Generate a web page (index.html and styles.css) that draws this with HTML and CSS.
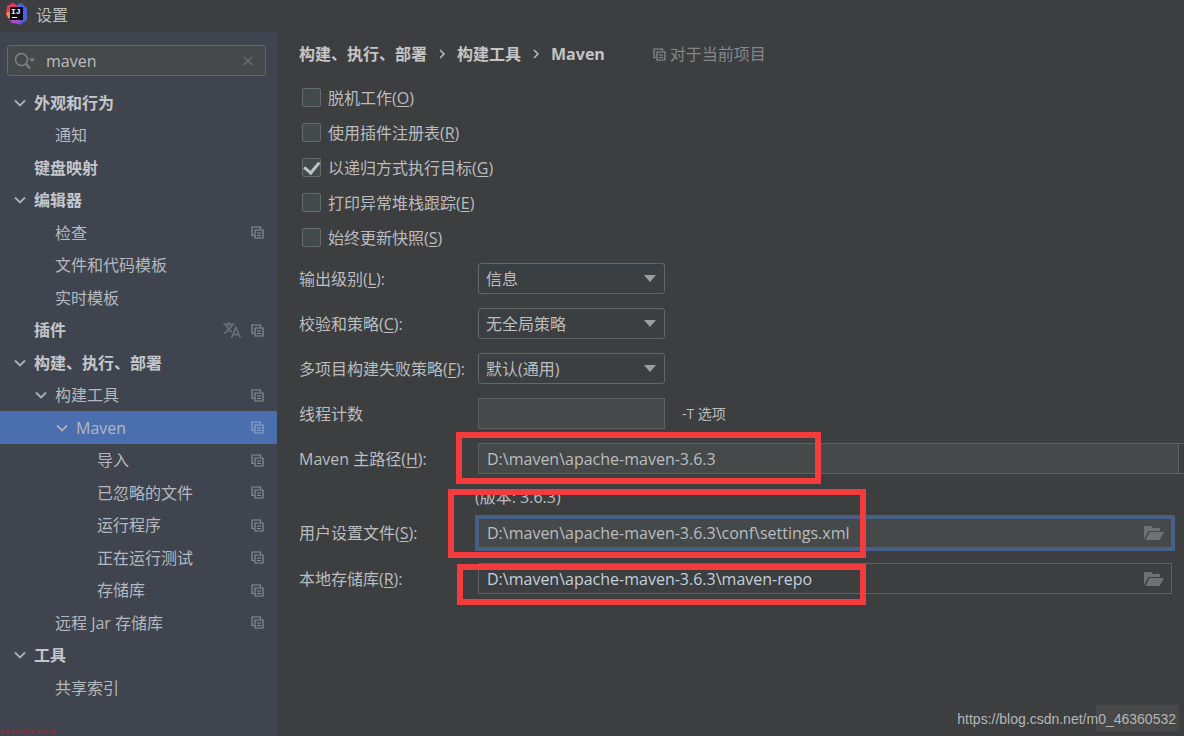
FILE: index.html
```html
<!DOCTYPE html>
<html lang="zh-CN">
<head>
<meta charset="utf-8">
<title>设置</title>
<link rel="stylesheet" href="styles.css">
</head>
<body>
<svg class="defs" aria-hidden="true">
  <symbol id="copy" viewBox="0 0 13 13"><path d="M3 9.500H1V1H9.500V3M4 4H12V12H4zM6 7H10M6 9.500H10" fill="none" stroke="currentColor" stroke-width="1.2"/></symbol>
  <symbol id="chevron" viewBox="0 0 12 8"><path d="M1 1.500L6 6.500L11 1.500" fill="none" stroke="currentColor" stroke-width="1.8"/></symbol>
  <symbol id="arrow" viewBox="0 0 12 7"><path d="M0 0H12L6 7z" fill="currentColor"/></symbol>
  <symbol id="folder" viewBox="0 0 20 16"><path d="M0 14V1H7L9 3H16V6H4.500zM5.500 7H20L15.500 15H1.500z" fill="currentColor"/></symbol>
  <symbol id="translate" viewBox="0 0 18 18"><path d="M0.500 3.500H11M5.800 1V3.500M8.800 3.500C8 7 5 10 1 12.500M3 3.500C4 7 6.500 9.500 9 11M8.500 17L12.800 6.500L17.200 17M10 13.500H15.700" fill="none" stroke="currentColor" stroke-width="1.8"/></symbol>
</svg>
<header class="titlebar">
  <svg class="logo" viewBox="0 0 22 22" aria-hidden="true">
    <path d="M1 3L7 0L12 3V10L3 15L0 11z" fill="#e8375f"/>
    <path d="M0 10L5 8V16L2 15z" fill="#f58a3c"/>
    <path d="M11 2L15 0L21 5V17L14 22L9 18z" fill="#4b62dc"/>
    <path d="M3 17L6 20L12 21L15 17z" fill="#a84ac4"/>
    <path d="M4 4H17V17H4z" fill="#08070b"/>
    <text class="logo-text" x="5" y="11">IJ</text>
    <path d="M6 14.500H11" stroke="#fff"/>
  </svg>
  <h1 class="title">设置</h1>
</header>
<div class="layout">
  <aside class="sidebar">
    <div class="search">
      <svg class="search-icon" viewBox="0 0 22 18" aria-hidden="true"><circle cx="7.500" cy="7.500" r="6" fill="none" stroke="currentColor" stroke-width="1.5"/><path d="M12 12L16 16.500" stroke="currentColor" stroke-width="2"/><path d="M15 6.500H21L18 10z" fill="currentColor"/></svg>
      <input class="search-input" type="text" value="maven" aria-label="搜索">
      <button class="clear" type="button" aria-label="清除"><svg viewBox="0 0 10 10"><path d="M1 1L9 9M9 1L1 9" stroke="currentColor" stroke-width="1.2"/></svg></button>
    </div>
    <ul class="tree">
      <li class="node top"><svg class="chev"><use href="#chevron"/></svg><span class="name">外观和行为</span></li>
      <li class="node l1"><span class="name">通知</span></li>
      <li class="node top leaf"><span class="name">键盘映射</span></li>
      <li class="node top"><svg class="chev"><use href="#chevron"/></svg><span class="name">编辑器</span></li>
      <li class="node l1"><span class="name">检查</span><svg class="copy"><use href="#copy"/></svg></li>
      <li class="node l1"><span class="name">文件和代码模板</span></li>
      <li class="node l1"><span class="name">实时模板</span></li>
      <li class="node top leaf"><span class="name">插件</span><svg class="translate"><use href="#translate"/></svg><svg class="copy"><use href="#copy"/></svg></li>
      <li class="node top"><svg class="chev"><use href="#chevron"/></svg><span class="name">构建、执行、部署</span></li>
      <li class="node sub"><svg class="chev"><use href="#chevron"/></svg><span class="name">构建工具</span><svg class="copy"><use href="#copy"/></svg></li>
      <li class="node subsub selected"><svg class="chev"><use href="#chevron"/></svg><span class="name">Maven</span><svg class="copy"><use href="#copy"/></svg></li>
      <li class="node l3"><span class="name">导入</span><svg class="copy"><use href="#copy"/></svg></li>
      <li class="node l3"><span class="name">已忽略的文件</span><svg class="copy"><use href="#copy"/></svg></li>
      <li class="node l3"><span class="name">运行程序</span><svg class="copy"><use href="#copy"/></svg></li>
      <li class="node l3"><span class="name">正在运行测试</span><svg class="copy"><use href="#copy"/></svg></li>
      <li class="node l3"><span class="name">存储库</span><svg class="copy"><use href="#copy"/></svg></li>
      <li class="node l1"><span class="name">远程 Jar 存储库</span><svg class="copy"><use href="#copy"/></svg></li>
      <li class="node top"><svg class="chev"><use href="#chevron"/></svg><span class="name">工具</span></li>
      <li class="node l1"><span class="name">共享索引</span></li>
    </ul>
  </aside>
  <main class="main">
    <div class="heading">
      <nav class="crumbs"><span>构建、执行、部署</span><svg class="sep" viewBox="0 0 6 10"><path d="M1 1L5 5L1 9"/></svg><span>构建工具</span><svg class="sep" viewBox="0 0 6 10"><path d="M1 1L5 5L1 9"/></svg><span>Maven</span></nav>
      <div class="scope"><svg class="copy"><use href="#copy"/></svg><span>对于当前项目</span></div>
    </div>
    <div class="checks">
      <label class="check"><input type="checkbox"><span>脱机工作(<u>O</u>)</span></label>
      <label class="check"><input type="checkbox"><span>使用插件注册表(<u>R</u>)</span></label>
      <label class="check"><input type="checkbox" checked><span>以递归方式执行目标(<u>G</u>)</span></label>
      <label class="check"><input type="checkbox"><span>打印异常堆栈跟踪(<u>E</u>)</span></label>
      <label class="check"><input type="checkbox"><span>始终更新快照(<u>S</u>)</span></label>
    </div>
    <div class="form">
      <div class="row"><label for="level">输出级别(<u>L</u>):</label><div class="combo"><select id="level"><option>信息</option></select><svg class="arrow"><use href="#arrow"/></svg></div></div>
      <div class="row"><label for="sum">校验和策略(<u>C</u>):</label><div class="combo"><select id="sum"><option>无全局策略</option></select><svg class="arrow"><use href="#arrow"/></svg></div></div>
      <div class="row"><label for="fail">多项目构建失败策略(<u>F</u>):</label><div class="combo"><select id="fail"><option>默认(通用)</option></select><svg class="arrow"><use href="#arrow"/></svg></div></div>
      <div class="row"><label for="threads">线程计数</label><input class="field short" id="threads" type="text"><span class="hint">-T 选项</span></div>
      <div class="row home"><label for="home">Maven 主路径(<u>H</u>):</label><div class="home-box"><input class="field" id="home" type="text" value="D:\maven\apache-maven-3.6.3"></div><div class="mark mark-home"></div></div>
    </div>
    <p class="version">(版本: 3.6.3)</p>
    <div class="row settings"><label for="settings">用户设置文件(<u>S</u>):</label><div class="file focused"><input id="settings" type="text" value="D:\maven\apache-maven-3.6.3\conf\settings.xml"><button type="button" aria-label="浏览"><svg><use href="#folder"/></svg></button></div><div class="mark mark-settings"></div></div>
    <div class="row repo"><label for="repo">本地存储库(<u>R</u>):</label><div class="file"><input id="repo" type="text" value="D:\maven\apache-maven-3.6.3\maven-repo"><button type="button" aria-label="浏览"><svg><use href="#folder"/></svg></button></div><div class="mark mark-repo"></div></div>
  </main>
</div>
<div class="stamp">xxxxxxx.com</div>
<div class="patch"></div>
<div class="watermark">https://blog.csdn.net/m0_46360532</div>
</body>
</html>
```

FILE: styles.css
```css
* { box-sizing: border-box; }
body {
  margin: 0;
  min-height: 100vh;
  display: flex;
  flex-direction: column;
  position: relative;
  overflow: hidden;
  background: #3c3e40;
  color: #bbbdbf;
  font: 16px/24px "Open Sans", "Noto Sans CJK SC", sans-serif;
}
.defs { display: none; }
svg { display: block; flex: none; }
input, select, button { font: inherit; color: inherit; margin: 0; }
button { padding: 0; border: 0; background: none; }
input:focus, select:focus { outline: none; }
u { text-underline-offset: 2px; }

.titlebar { display: flex; align-items: center; gap: 8px; height: 32px; padding: 0 6px 4px; background: #3c3e3f; }
.logo { width: 22px; height: 22px; }
.logo-text { font: bold 8px "Liberation Mono", monospace; fill: #fff; }
.title { margin: 0; font-size: 16px; font-weight: 400; padding-top: 2px; }

.layout { flex: 1; display: flex; }
.sidebar { width: 277px; flex: none; background: #40444e; padding-top: 13px; }
.search { display: flex; align-items: center; height: 31px; margin: 0 11px 10px 7px; padding: 0 12px 0 6px; border: 1px solid #63676a; border-radius: 3px; background: #45494a; }
.search-icon { width: 22px; height: 18px; color: #7f8487; }
.search-input { flex: 1; min-width: 0; border: 0; padding: 0 10px; background: none; }
.clear { color: #6d7173; }
.clear svg { width: 10px; height: 10px; }

.tree { list-style: none; margin: 0; padding: 0; color: #b4b8bf; }
.node { display: flex; align-items: center; height: 32px; padding-right: 13px; }
.node:nth-child(odd) { height: 33px; }
.node .name { flex: 1; white-space: nowrap; }
.top { padding-left: 14px; font-weight: 700; color: #c3c6ca; }
.leaf { padding-left: 34px; }
.sub { padding-left: 35px; }
.subsub { padding-left: 56px; }
.l1 { padding-left: 55px; }
.l3 { padding-left: 97px; }
.chev { width: 12px; height: 8px; margin-right: 8px; color: #adb1b5; }
.copy { width: 13px; height: 13px; color: #8b8f96; }
.translate { width: 18px; height: 18px; margin-right: 10px; color: #686c76; }
.selected { background: #4b6eaf; }
.selected .copy { color: #91a4cb; }

.main { flex: 1; min-width: 0; padding: 10px 12px 0 22px; overflow: hidden; }
.heading { display: flex; align-items: center; gap: 48px; }
.crumbs { display: flex; align-items: center; gap: 12px; font-weight: 700; color: #c3c5c6; }
.sep { width: 6px; height: 10px; fill: none; stroke: #bbbdbf; stroke-width: 1.5; }
.scope { display: flex; align-items: center; gap: 4px; color: #85888a; }
.checks { padding: 14px 0 0 3px; }
.check { display: flex; align-items: center; gap: 7px; height: 35px; width: max-content; }
.check input { appearance: none; width: 19px; height: 19px; border: 1px solid #656a6b; border-radius: 2px; background: #434a4a; display: grid; place-items: center; }
.check input:checked::before { content: ""; width: 7px; height: 12px; border: solid #c0c4c4; border-width: 0 3px 3px 0; transform: rotate(40deg) translate(-1px, -1px); }

.form { display: flex; flex-direction: column; gap: 14px; padding-top: 8px; }
.row { display: flex; align-items: center; height: 31px; position: relative; }
.row label { width: 179px; flex: none; white-space: nowrap; }
.combo { position: relative; width: 187px; }
.combo select { appearance: none; display: block; width: 100%; height: 31px; padding: 0 7px; border: 1px solid #63676a; border-radius: 3px; background: #3c3f41; }
.arrow { position: absolute; right: 9px; top: 12px; width: 12px; height: 7px; color: #9b9fa1; pointer-events: none; }
.field { height: 31px; padding: 0 8px; border: 1px solid #5e6163; background: #45494a; }
.short { width: 187px; }
.hint { margin-left: 17px; font-size: 14px; }
.home-box { flex: 1; display: flex; margin-right: -24px; padding-right: 17px; border: solid #5e6163; border-width: 1px 0; }
.home-box .field { flex: 1; height: 29px; border-width: 0 1px; }
.version { margin: 0; padding: 11px 0 6px 176px; }
.settings { height: 36px; }
.repo { margin-top: 12px; }
.file { flex: 1; height: 31px; display: flex; align-items: center; border: 1px solid #5e6163; padding: 0 7px 0 8px; }
.file input { flex: 1; min-width: 0; border: 0; padding: 0; background: none; }
.file button { color: #6e7273; }
.file svg { width: 20px; height: 16px; }
.file.focused { height: 36px; margin: 0 -3px; border: 4px solid #466088; background: #45494a; }
.repo input { color: #c4d0dc; }

.mark { position: absolute; border: 6px solid #f43b3e; pointer-events: none; }
.mark-home { left: 157px; top: -11px; width: 365px; height: 52px; }
.mark-settings { left: 149px; top: -26px; width: 418px; height: 69px; }
.mark-repo { left: 158px; top: 1px; width: 409px; height: 41px; }

.watermark { position: absolute; right: 8px; bottom: 7px; font: 14px/20px "Liberation Sans", sans-serif; color: #b5b7b8; }
.patch { position: absolute; right: 5px; bottom: 5px; width: 83px; height: 26px; background: #484848; }
.stamp { position: absolute; left: 0; bottom: 0; font: bold 9px/10px "Liberation Sans", sans-serif; color: #87303a; }
```
